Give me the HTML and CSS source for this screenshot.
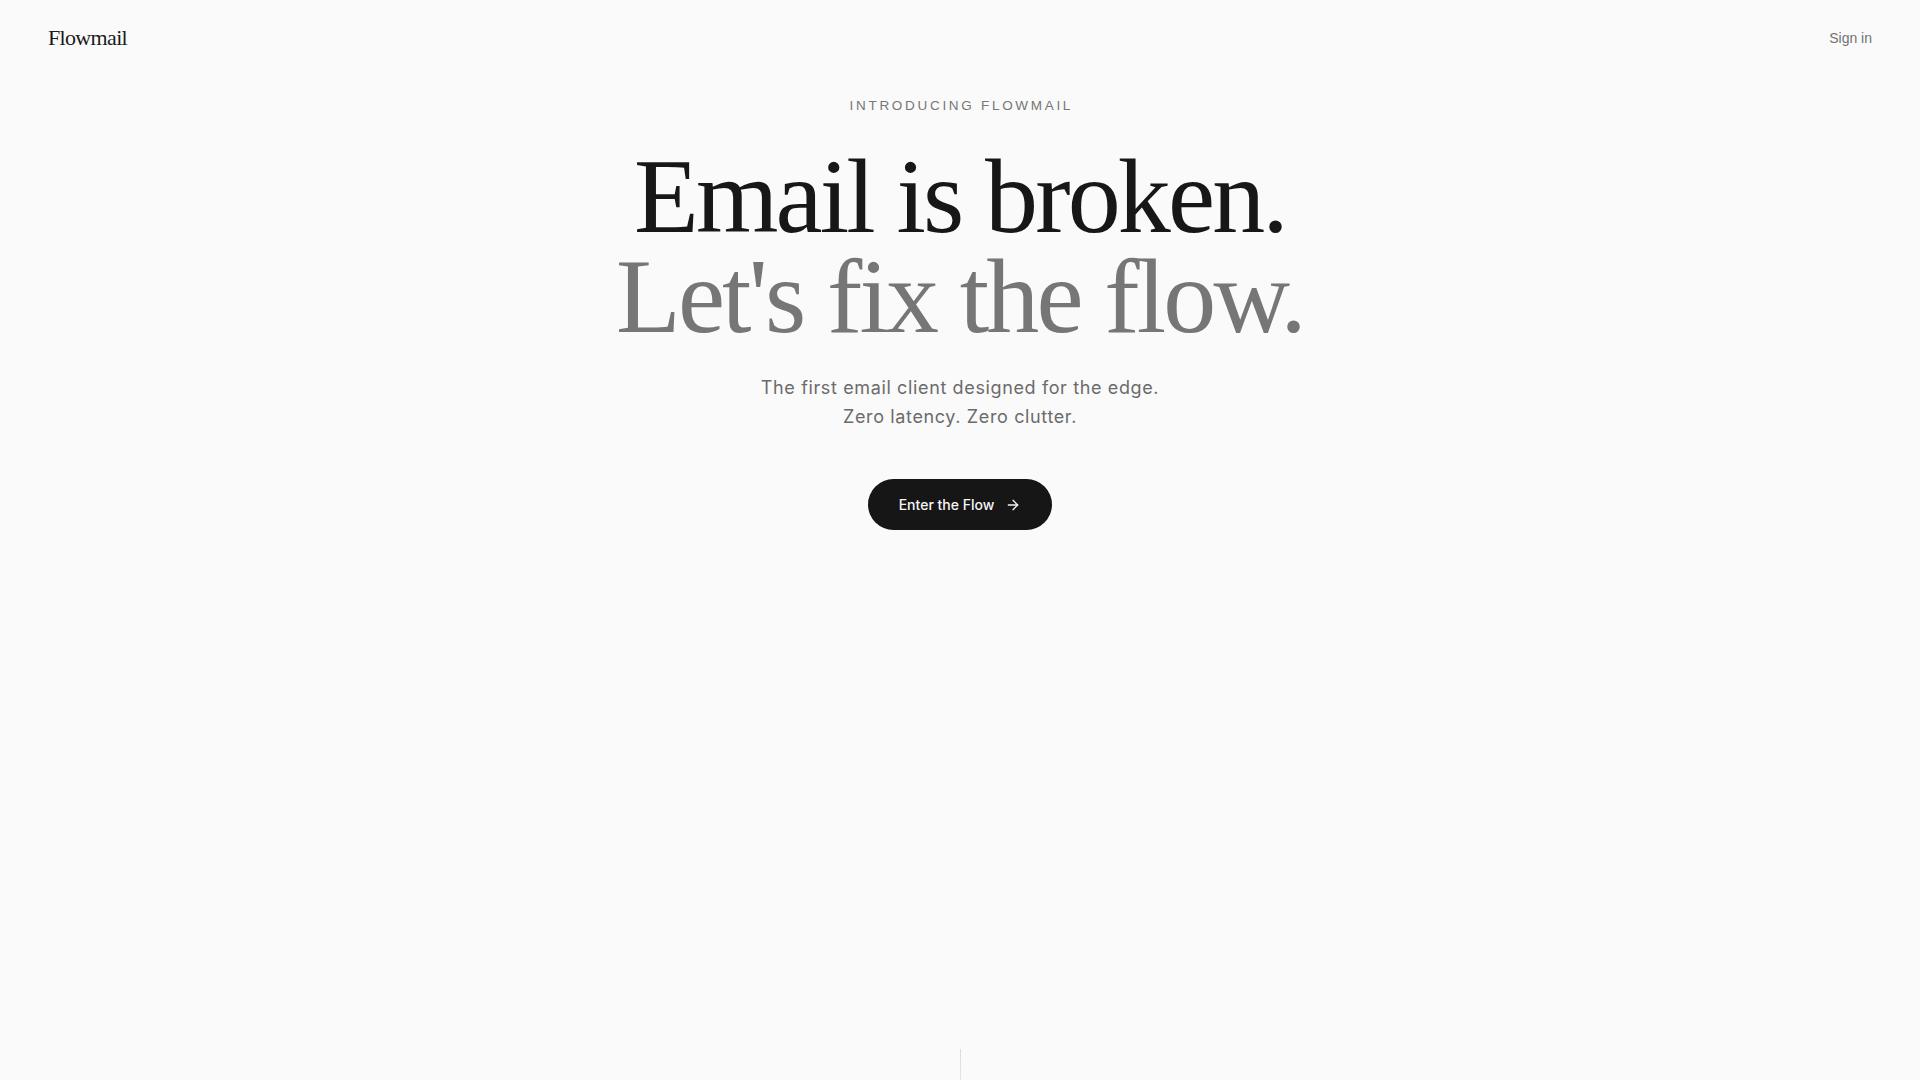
FILE: index.html
```html
<!DOCTYPE html>
<html lang="en">
<head>
<meta charset="utf-8">
<title>Flowmail</title>
<link rel="stylesheet" href="styles.css">
</head>
<body>
<div class="page">
  <header class="header">
    <a class="logo" href="#">Flowmail</a>
    <a class="signin" href="#">Sign in</a>
  </header>
  <main class="hero">
    <p class="eyebrow">INTRODUCING FLOWMAIL</p>
    <h1 class="headline">
      <span class="line-dark">Email is broken.</span>
      <span class="line-light">Let's fix the flow.</span>
    </h1>
    <p class="subtitle">The first email client designed for the edge.<br>Zero latency. Zero clutter.</p>
    <a class="cta" href="#">
      <span>Enter the Flow</span>
      <svg class="cta-icon" width="16" height="16" viewBox="0 0 24 24" fill="none" stroke="currentColor" stroke-width="2" stroke-linecap="round" stroke-linejoin="round"><path d="M5 12h14"/><path d="m12 5 7 7-7 7"/></svg>
    </a>
  </main>
  <footer class="scroll-hint">
    <div class="scroll-line"></div>
  </footer>
</div>
</body>
</html>
```

FILE: styles.css
```css
* { box-sizing: border-box; }
html, body { margin: 0; padding: 0; }
body {
  background: #fafafa;
  color: #171717;
  font-family: Inter, "Liberation Sans", sans-serif;
}
a { text-decoration: none; color: inherit; }
.page {
  min-height: 100vh;
  display: flex;
  flex-direction: column;
  overflow: hidden;
}
.header {
  display: flex;
  justify-content: space-between;
  align-items: center;
  padding: 24px 48px;
  height: 76px;
}
.logo {
  font-family: "Liberation Serif", serif;
  font-size: 22px;
  line-height: 28px;
  letter-spacing: -0.03em;
  color: #1a1a1a;
}
.signin {
  font-family: "Liberation Sans", sans-serif;
  font-size: 14px;
  line-height: 20px;
  color: #737373;
}
.hero {
  display: flex;
  flex-direction: column;
  align-items: center;
  text-align: center;
  padding-top: 20px;
}
.eyebrow {
  margin: 0;
  font-family: "Liberation Sans", sans-serif;
  font-size: 13.5px;
  line-height: 20px;
  letter-spacing: 0.2em;
  color: #767676;
  padding-left: 0.2em;
}
.headline {
  margin: 31px 0 0;
  font-family: "Liberation Serif", serif;
  font-weight: 400;
  font-size: 106px;
  line-height: 100px;
  letter-spacing: -0.027em;
  display: flex;
  flex-direction: column;
  align-items: center;
}
.line-dark { color: #171717; }
.line-light { color: #767676; }
.subtitle {
  margin: 27px 0 0;
  font-size: 18px;
  line-height: 28.5px;
  color: #6b6b6b;
  letter-spacing: 0.035em;
}
.cta {
  margin-top: 48px;
  display: inline-flex;
  align-items: center;
  gap: 11px;
  height: 51px;
  padding: 0 31px;
  border-radius: 999px;
  background: #161616;
  color: #f5f5f5;
  font-size: 14px;
  font-weight: 500;
  line-height: 20px;
}
.cta-icon { display: block; }
.scroll-hint {
  margin-top: auto;
  display: flex;
  justify-content: center;
  height: 31px;
}
.scroll-line {
  width: 1px;
  height: 100%;
  background: linear-gradient(to bottom, #dcdcdc, #e6e6e6);
}
```
